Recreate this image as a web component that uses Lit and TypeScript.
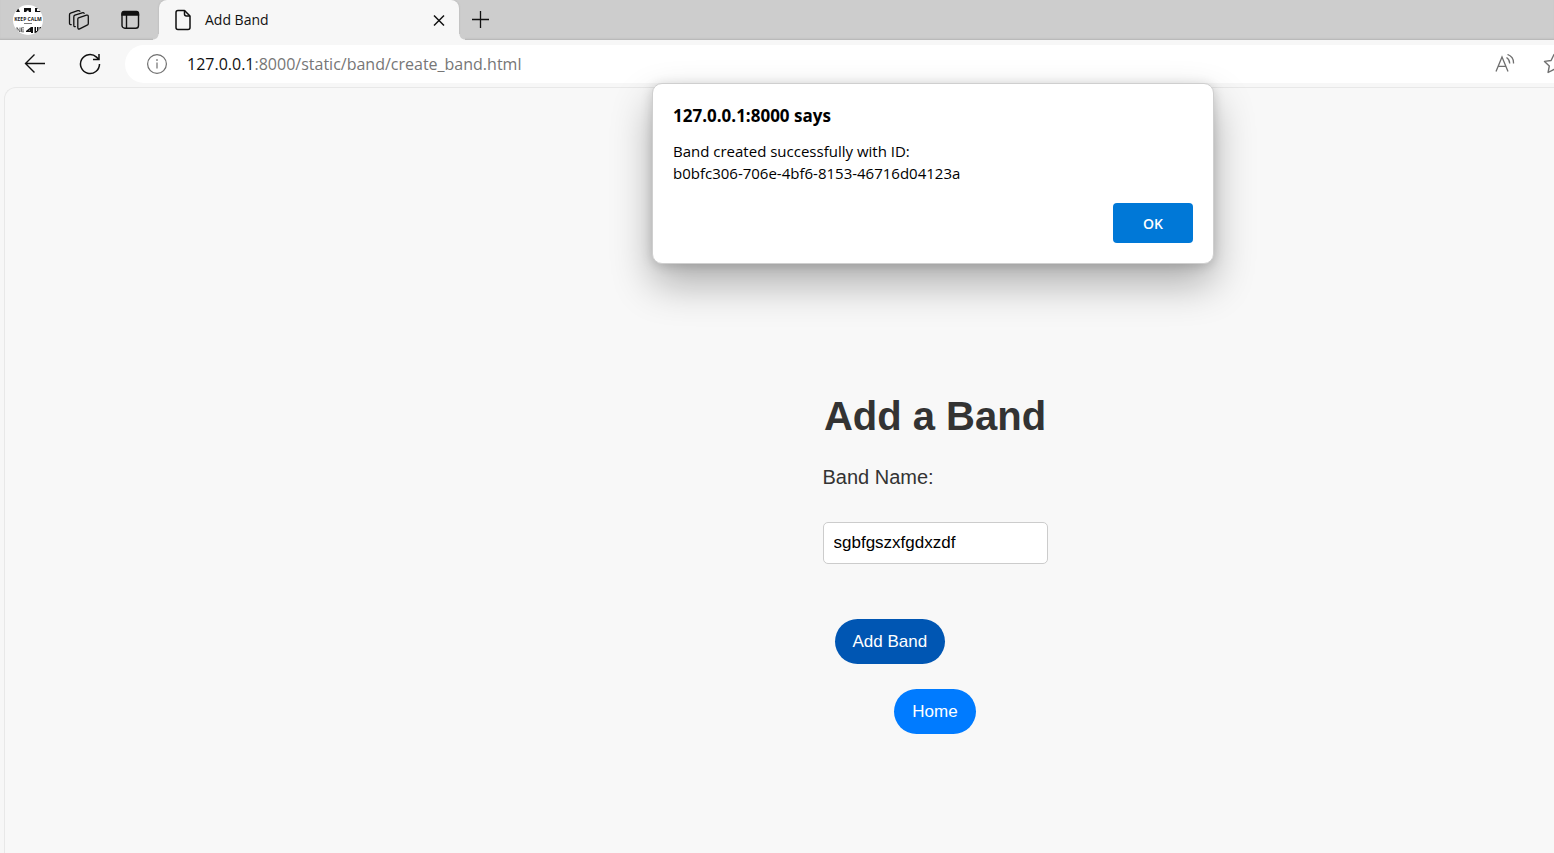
import { LitElement, html, css } from "lit";
import { customElement, property, state } from "lit/decorators.js";

@customElement("browser-tabs")
class BrowserTabs extends LitElement {
  @property() label = "";

  static styles = css`
    :host {
      display: flex;
      height: 40px;
      background: #cdcdcd;
      box-shadow: inset 0 -2px 2px -1px #b4b4b4;
      font: 14px/20px "Open Sans", "Noto Sans", sans-serif;
      color: #111;
    }
    button {
      border: 0;
      padding: 0;
      margin: 0;
      background: none;
      display: grid;
      place-items: center;
      color: inherit;
    }
    svg {
      display: block;
      fill: none;
      stroke: currentColor;
    }
    .tools {
      display: flex;
      align-items: center;
      gap: 19px;
      padding-left: 12px;
      width: 147px;
    }
    .tools button {
      width: 32px;
    }
    .tools svg.avatar {
      stroke: none;
    }
    .avatar text {
      font: 700 5px "Open Sans", sans-serif;
      fill: #222;
      text-anchor: middle;
    }
    .tab {
      display: flex;
      align-items: center;
      width: 300px;
      box-sizing: border-box;
      padding: 0 12px 0 15px;
      gap: 13px;
      background: #f7f7f7;
      border-radius: 8px 8px 0 0;
      position: relative;
      box-shadow: 0 0 2px #aaa;
      clip-path: inset(0 -6px 0 -6px);
    }
    .tab::before,
    .tab::after {
      content: "";
      position: absolute;
      bottom: 0;
      width: 6px;
      height: 6px;
    }
    .tab::before {
      left: -6px;
      background: radial-gradient(circle at 0 0, #cdcdcd 5px, #f7f7f7 6px);
    }
    .tab::after {
      right: -6px;
      background: radial-gradient(circle at 100% 0, #cdcdcd 5px, #f7f7f7 6px);
    }
    .title {
      flex: 1;
    }
    .add {
      width: 44px;
    }
  `;

  render() {
    return html`
      <div class="tools">
        <button aria-label="Profile">
          <svg class="avatar" width="30" height="30" viewBox="0 0 30 30">
            <defs><clipPath id="round"><circle cx="15" cy="15" r="15" /></clipPath></defs>
            <g clip-path="url(#round)">
              <rect width="30" height="30" fill="#fff" />
              <path d="M3 7l2-4 2 4zM11 3h7v4h-2l-1-2-2 2h-2zM22 3h5v1h-3v2h4v1h-6z" fill="#111" />
              <path d="M11 18.500h8" stroke="#777" />
              <path d="M4 22.500v4.500M4 22.500l3 4.500v-4.500M11 22.800h-2.500v4h2.500M8.500 25h2.500" stroke="#444" stroke-width=".8" fill="none" />
              <path d="M13 26l5-4h2v6h-2v-1h-5zM17 24.500l-1.500 1h1.500zM21.500 22h1.500v4h1v-4h1.500v4h1v-4H28v6h-6.500z" fill="#111" fill-rule="evenodd" />
            </g>
            <text x="15" y="16">KEEP CALM</text>
          </svg>
        </button>
        <button aria-label="Workspaces">
          <svg width="22" height="22" viewBox="0 0 22 22" stroke-width="1.300" stroke-linejoin="round" stroke-linecap="round">
            <path d="M10.500 8.800l8-2.600q1.800-.4 1.800 1.300v7q0 1.200-1.200 1.700l-7.400 3.600q-1.900.7-1.900-1.200v-8.200q0-1.200.7-1.600z" />
            <path d="M7.300 17.700q-1.500.2-1.500-1.400V7.900q0-1.300 1.100-1.700l7.200-2.400q1.700-.4 2 .6" />
            <path d="M3.200 15.700q-1.700 0-1.700-1.500V5.800q0-1.300 1.100-1.700l7.100-2.400q1.700-.4 2.200.5" />
          </svg>
        </button>
        <button aria-label="Tab actions">
          <svg width="20" height="20" viewBox="0 0 20 20" stroke-width="1.400">
            <rect x="2" y="1.700" width="16.500" height="16.500" rx="2.800" />
            <path d="M2 3.500q0-2 2-2h12.500q2 0 2 2V5H2z" fill="currentColor" />
            <path d="M6.500 5v13" />
          </svg>
        </button>
      </div>
      <div class="tab">
        <svg width="18" height="22" viewBox="0 0 18 22" stroke-width="1.500" stroke-linejoin="round">
          <path d="M4 1.500h6.500l5.500 5.500v11.500q0 2-2 2H4q-2 0-2-2v-15q0-2 2-2z" />
          <path d="M10.500 1.500V5q0 2 2 2H16" />
        </svg>
        <span class="title">${this.label}</span>
        <button aria-label="Close tab">
          <svg width="16" height="16" viewBox="0 0 16 16" stroke-width="1.500"><path d="M3 3.500l10 10M13 3.500l-10 10" /></svg>
        </button>
      </div>
      <button class="add" aria-label="New tab">
        <svg width="18" height="18" viewBox="0 0 18 18" stroke-width="1.300"><path d="M8.500 0v17M0 8.500h17" /></svg>
      </button>
    `;
  }
}

@customElement("address-toolbar")
class AddressToolbar extends LitElement {
  @property() host = "";
  @property() path = "";

  static styles = css`
    :host {
      display: flex;
      align-items: center;
      height: 47px;
      background: #f7f7f7;
      font: 16px/24px "Open Sans", "Noto Sans", sans-serif;
      color: #111;
      overflow: hidden;
    }
    button {
      border: 0;
      padding: 0;
      background: none;
      flex: none;
      color: inherit;
    }
    svg {
      display: block;
      fill: none;
      stroke: currentColor;
    }
    .nav {
      display: flex;
      gap: 33px;
      padding: 0 24px;
    }
    .bar {
      flex: 1;
      display: flex;
      align-items: center;
      height: 38px;
      padding-left: 21px;
      margin-right: -11px;
      background: #fff;
      border-radius: 19px 0 0 19px;
      color: #6f6f6f;
    }
    .url {
      flex: 1;
      margin-left: 19px;
      color: #767676;
    }
    .host {
      color: #111;
    }
    .star {
      margin-left: 28px;
    }
  `;

  render() {
    return html`
      <div class="nav">
        <button aria-label="Back">
          <svg width="22" height="22" viewBox="0 0 22 22" stroke-width="1.400"><path d="M21 10.500H1.500M10.500 1.500l-9 9 9 9" /></svg>
        </button>
        <button aria-label="Refresh">
          <svg width="22" height="22" viewBox="0 0 22 22" stroke-width="1.500">
            <path d="M20.500 11a9.500 9.500 0 1 1-3-6.900L20 6.500M20 1v5.500h-6" />
          </svg>
        </button>
      </div>
      <div class="bar">
        <button aria-label="Site information">
          <svg width="22" height="22" viewBox="0 0 22 22" stroke-width="1.200">
            <circle cx="11" cy="11" r="9.400" />
            <path d="M11 9.500v6" />
            <circle cx="11" cy="7" r=".6" fill="currentColor" stroke-width=".6" />
          </svg>
        </button>
        <span class="url"><span class="host">${this.host}</span>${this.path}</span>
        <button aria-label="Read aloud">
          <svg width="20" height="20" viewBox="0 0 20 20" stroke-width="1.300">
            <path d="M1 17.500L7 3l6 14.500M3.200 12.300h7.600M11.500 3.500a7 7 0 0 1 3.200 6M12.500.5a9 9 0 0 1 6 9" />
          </svg>
        </button>
        <button class="star" aria-label="Add to favorites">
          <svg width="22" height="22" viewBox="0 0 22 22" stroke-width="1.400" stroke-linejoin="round">
            <path d="M11 1.500l2.900 6 6.600.9-4.800 4.600 1.200 6.500-5.900-3.100-5.900 3.100 1.200-6.500L1.500 8.400l6.600-.9z" />
          </svg>
        </button>
      </div>
    `;
  }
}

@customElement("alert-dialog")
class AlertDialog extends LitElement {
  @property() heading = "";
  @property() message = "";

  static styles = css`
    :host {
      display: block;
      box-sizing: border-box;
      width: 562px;
      padding: 20px;
      background: #fff;
      border: 1px solid #cfcfcf;
      border-radius: 10px;
      box-shadow: 0 20px 40px rgba(0, 0, 0, 0.3), 0 2px 12px rgba(0, 0, 0, 0.16);
      font: 15px/22px "Open Sans", "Noto Sans", sans-serif;
      color: #000;
    }
    h2 {
      margin: 0 0 12px;
      font-size: 17px;
      line-height: 24px;
      font-weight: 700;
    }
    p {
      margin: 0 0 19px;
      white-space: pre-line;
    }
    .actions {
      display: flex;
      justify-content: flex-end;
    }
    button {
      width: 80px;
      height: 40px;
      border: 0;
      border-radius: 4px;
      background: #0078d7;
      color: #fff;
      font: 600 14px "Open Sans", "Noto Sans", sans-serif;
    }
  `;

  render() {
    return html`
      <div role="alertdialog" aria-labelledby="heading" aria-describedby="message">
        <h2 id="heading">${this.heading}</h2>
        <p id="message">${this.message}</p>
        <div class="actions"><button>OK</button></div>
      </div>
    `;
  }
}

@customElement("band-form")
class BandForm extends LitElement {
  @state() private name = "sgbfgszxfgdxzdf";

  static styles = css`
    :host {
      display: flex;
      flex-direction: column;
      align-items: center;
      font-family: "Liberation Sans", Arial, sans-serif;
      color: #333;
    }
    h1 {
      margin: 0 0 26px;
      font-size: 40px;
      line-height: 46px;
    }
    form {
      display: flex;
      flex-direction: column;
      align-items: flex-start;
      width: 225px;
    }
    label {
      font-size: 20px;
      line-height: 24px;
      margin-bottom: 33px;
    }
    input {
      box-sizing: border-box;
      width: 100%;
      height: 42px;
      padding: 0 10px;
      border: 1px solid #ccc;
      border-radius: 5px;
      background: #fff;
      color: #000;
      font: 17px "Liberation Sans", Arial, sans-serif;
    }
    .pill {
      height: 45px;
      padding: 0 18px;
      border: 0;
      border-radius: 25px;
      color: #fff;
      background: #007bff;
      font: 17px/45px "Liberation Sans", Arial, sans-serif;
      text-decoration: none;
    }
    .submit {
      margin: 55px 0 25px 12px;
      background: #0056b3;
    }
  `;

  render() {
    return html`
      <h1>Add a Band</h1>
      <form @submit=${(e: Event) => e.preventDefault()}>
        <label for="name">Band Name:</label>
        <input
          id="name"
          type="text"
          spellcheck="false"
          .value=${this.name}
          @input=${(e: InputEvent) => (this.name = (e.target as HTMLInputElement).value)}
        />
        <button class="pill submit">Add Band</button>
      </form>
      <a class="pill" href="#">Home</a>
    `;
  }
}

@customElement("app-root")
class AppRoot extends LitElement {
  static styles = css`
    :host {
      display: flex;
      flex-direction: column;
      min-height: 100vh;
      background: #f7f7f7;
      position: relative;
      overflow: hidden;
    }
    .page {
      flex: 1;
      margin-left: 4px;
      padding: 305px 0 40px 311px;
      border: solid #e8e8e8;
      border-width: 1px 0 0 1px;
      border-radius: 12px 0 0 0;
      background: #f8f8f8;
    }
    .overlay {
      position: absolute;
      inset: 83px 0 auto 0;
      display: flex;
      justify-content: center;
      padding-left: 312px;
    }
  `;

  render() {
    return html`
      <browser-tabs label="Add Band"></browser-tabs>
      <address-toolbar host="127.0.0.1" path=":8000/static/band/create_band.html"></address-toolbar>
      <main class="page"><band-form></band-form></main>
      <div class="overlay">
        <alert-dialog
          heading="127.0.0.1:8000 says"
          .message=${"Band created successfully with ID:\nb0bfc306-706e-4bf6-8153-46716d04123a"}
        ></alert-dialog>
      </div>
    `;
  }
}
